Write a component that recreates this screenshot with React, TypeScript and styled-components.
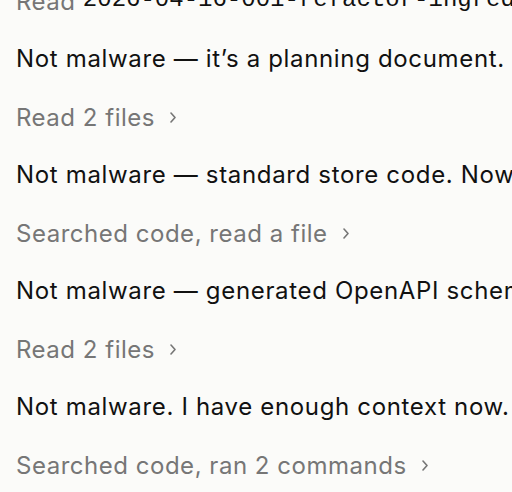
import React from "react";
import styled, { createGlobalStyle } from "styled-components";

const Global = createGlobalStyle`
  html, body { margin: 0; padding: 0; background: #fbfbf9; overflow: hidden; }
  body { font-family: Inter, "Noto Sans", sans-serif; }
`;

const Viewport = styled.div`
  width: 512px;
  height: 492px;
  overflow: hidden;
  background: #fbfbf9;
`;

const List = styled.div`
  display: flex;
  flex-direction: column;
  margin-top: -28px;
  padding-left: 16px;
`;

const Message = styled.div`
  font-size: 24px;
  letter-spacing: 0.66px;
  line-height: 58px;
  color: #111111;
  white-space: nowrap;
`;

const Activity = styled.div`
  display: flex;
  align-items: center;
  height: 58px;
  font-size: 24px;
  letter-spacing: 0.52px;
  color: #767676;
  white-space: pre;
`;

const Code = styled.span`
  font-family: "Liberation Mono", monospace;
  font-size: 24px;
  letter-spacing: 0;
  color: #111111;
  margin-top: -3px;
`;

const Chevron = styled.svg`
  width: 6px;
  height: 11px;
  margin-left: 15px;
  flex: none;
`;

const ChevronIcon = () => (
  <Chevron viewBox="0 0 6 11" fill="none">
    <path d="M1 1 L5 5.5 L1 10" stroke="#767676" strokeWidth="1.6" strokeLinecap="round" strokeLinejoin="round" />
  </Chevron>
);

type Item = { kind: "msg"; text: string } | { kind: "act"; text: string; code?: string; chevron?: boolean };

const items: Item[] = [
  { kind: "act", text: "Read ", code: "2026-04-16-001-refactor-ingredient" },
  { kind: "msg", text: "Not malware — it’s a planning document. Let me check the rest." },
  { kind: "act", text: "Read 2 files", chevron: true },
  { kind: "msg", text: "Not malware — standard store code. Now let me look further." },
  { kind: "act", text: "Searched code, read a file", chevron: true },
  { kind: "msg", text: "Not malware — generated OpenAPI schema types." },
  { kind: "act", text: "Read 2 files", chevron: true },
  { kind: "msg", text: "Not malware. I have enough context now." },
  { kind: "act", text: "Searched code, ran 2 commands", chevron: true },
];

export default function App() {
  return (
    <Viewport>
      <Global />
      <List>
        {items.map((it, i) =>
          it.kind === "msg" ? (
            <Message key={i}>{it.text}</Message>
          ) : (
            <Activity key={i}>
              <span>{it.text}</span>
              {it.code && <Code>{it.code}</Code>}
              {it.chevron && <ChevronIcon />}
            </Activity>
          )
        )}
      </List>
    </Viewport>
  );
}
